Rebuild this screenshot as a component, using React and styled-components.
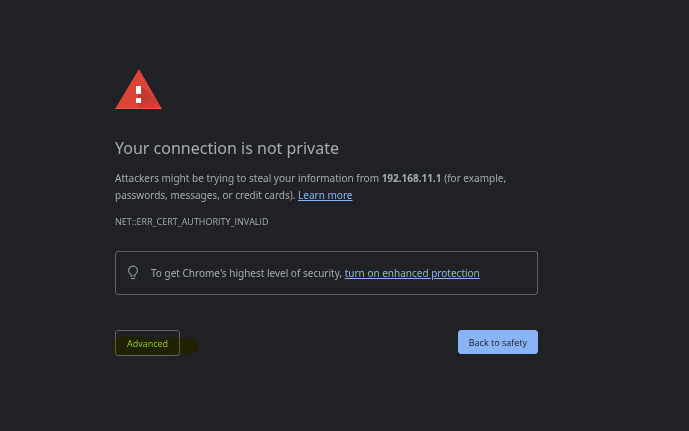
import React from "react"
import styled, { createGlobalStyle } from "styled-components"

const GlobalStyle = createGlobalStyle`
  * {
    box-sizing: border-box;
  }

  body {
    margin: 0;
    background: #202124;
    color: #a6acb2;
    font-family: "Noto Sans", "Open Sans", sans-serif;
    font-size: 10px;
    line-height: 17px;
  }
`

const Page = styled.main`
  max-width: 538px;
  padding: 69px 0 72px 115px;
`

const WarningIcon = styled.svg`
  display: block;
  width: 48px;
  height: 41px;
`

const Title = styled.h1`
  margin: 26px 0 10px;
  font-size: 16px;
  font-weight: 400;
  line-height: 24px;
`

const Message = styled.p`
  margin: 0;
`

const ErrorCode = styled.p`
  margin: 9px 0 21px;
  font-family: "Open Sans", "Noto Sans", sans-serif;
  font-size: 9px;
`

const TextLink = styled.a`
  color: #8ab4f8;
  text-decoration: underline;
`

const Promo = styled.section`
  display: flex;
  align-items: center;
  gap: 12px;
  height: 44px;
  padding: 0 11px;
  border: 1px solid #5f6368;
  border-radius: 3px;
`

const BulbIcon = styled.svg`
  flex: none;
  width: 12px;
  height: 16px;
`

const Actions = styled.div`
  display: flex;
  justify-content: space-between;
  align-items: flex-start;
  margin-top: 35px;
`

const Marked = styled.div`
  position: relative;
`

const Marker = styled.svg`
  position: absolute;
  top: 6px;
  left: 0;
  width: 84px;
  height: 20px;
  mix-blend-mode: multiply;
  pointer-events: none;
`

const Button = styled.button`
  display: block;
  height: ${(props) => (props.$primary ? 24 : 26)}px;
  padding: 0 ${(props) => (props.$primary ? 10 : 11)}px;
  border: 1px solid ${(props) => (props.$primary ? "#8ab4f8" : "#5f6368")};
  border-radius: 3px;
  background: ${(props) => (props.$primary ? "#8ab4f8" : "transparent")};
  color: ${(props) => (props.$primary ? "#202124" : "#9cc8ff")};
  font-family: "Open Sans", "Noto Sans", sans-serif;
  font-size: 9px;
  cursor: pointer;
`

export default function App() {
  return (
    <>
      <GlobalStyle />
      <Page>
        <WarningIcon viewBox="0 0 48 41" aria-hidden="true">
          <defs>
            <linearGradient id="shade" x1="0" y1="0" x2="1" y2="1">
              <stop offset="0.2" stopColor="#b03428" stopOpacity="0.7" />
              <stop offset="1" stopColor="#b03428" stopOpacity="0" />
            </linearGradient>
          </defs>
          <path d="M24 0L47 40H0z" fill="#db4437" />
          <path d="M26 17l15 13 6 10H27l-6-6z" fill="url(#shade)" />
          <path d="M0 40l1-1h45l1 1z" fill="#f05545" />
          <path d="M21 17h5v8h-5zM21 29h5v5h-5z" fill="#fff" />
        </WarningIcon>
        <Title>Your connection is not private</Title>
        <Message>
          Attackers might be trying to steal your information from{" "}
          <strong>192.168.11.1</strong> (for example, passwords, messages, or
          credit cards). <TextLink href="#learn-more">Learn more</TextLink>
        </Message>
        <ErrorCode>NET::ERR_CERT_AUTHORITY_INVALID</ErrorCode>
        <Promo>
          <BulbIcon viewBox="0 0 12 16" fill="none" stroke="#8a9095" strokeWidth="1.2" aria-hidden="true">
            <path d="M4 11V9.500C2.500 8.800 1.600 7.300 1.600 5.600a4.400 4.400 0 0 1 8.800 0C10.400 7.300 9.500 8.800 8 9.500V11z" />
            <path d="M4 13.500h4" />
          </BulbIcon>
          <span>
            To get Chrome's highest level of security,{" "}
            <TextLink href="#enhanced-protection">turn on enhanced protection</TextLink>
          </span>
        </Promo>
        <Actions>
          <Marked>
            <Button type="button">Advanced</Button>
            <Marker viewBox="0 0 84 20" aria-hidden="true">
              <path
                d="M0 3L10 0H20L28 2H80Q84 3 84 8V13Q84 17 79 17L60 18 50 19H3Q0 19 0 16z"
                fill="#f8ff00"
              />
            </Marker>
          </Marked>
          <Button type="button" $primary>Back to safety</Button>
        </Actions>
      </Page>
    </>
  )
}
